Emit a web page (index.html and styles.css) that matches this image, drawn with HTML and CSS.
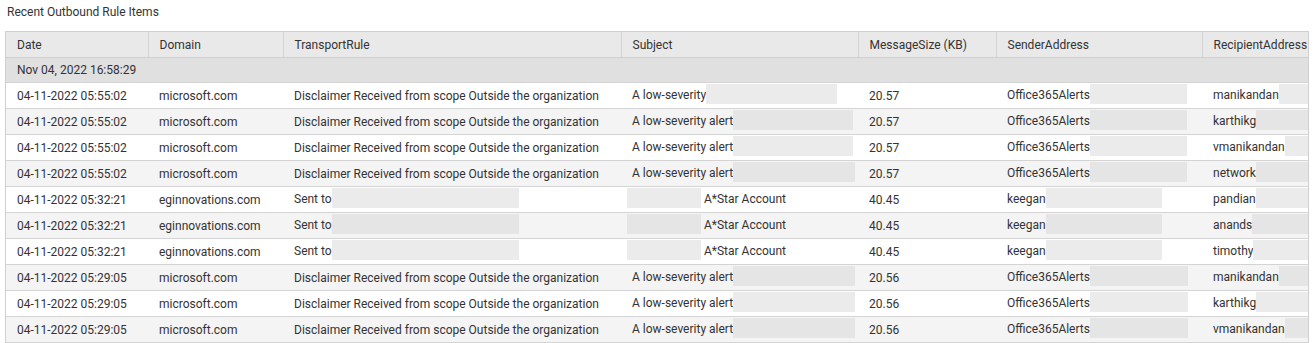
FILE: index.html
```html
<!DOCTYPE html>
<html>
<head>
<meta charset="utf-8">
<link rel="stylesheet" href="styles.css">
</head>
<body>
<div class="page">
  <div class="title">Recent Outbound Rule Items</div>
  <div class="grid-wrap">
    <table class="grid">
      <colgroup>
        <col class="c-date"><col class="c-domain"><col class="c-rule"><col class="c-subj"><col class="c-size"><col class="c-sender"><col class="c-recip">
      </colgroup>
      <thead>
        <tr><th>Date</th><th>Domain</th><th>TransportRule</th><th>Subject</th><th>MessageSize (KB)</th><th>SenderAddress</th><th>RecipientAddress</th></tr>
      </thead>
      <tbody>
        <tr class="group"><td colspan="7">Nov 04, 2022 16:58:29</td></tr>
        <tr><td>04-11-2022 05:55:02</td><td>microsoft.com</td><td>Disclaimer Received from scope Outside the organization</td><td>A low-severity<span class="rd" style="width:131px"></span></td><td>20.57</td><td>Office365Alerts<span class="rd" style="width:97px"></span></td><td>manikandan<span class="rd" style="width:60px"></span></td></tr>
        <tr><td>04-11-2022 05:55:02</td><td>microsoft.com</td><td>Disclaimer Received from scope Outside the organization</td><td>A low-severity alert<span class="rd" style="width:120px"></span></td><td>20.57</td><td>Office365Alerts<span class="rd" style="width:97px"></span></td><td>karthikg<span class="rd" style="width:60px"></span></td></tr>
        <tr><td>04-11-2022 05:55:02</td><td>microsoft.com</td><td>Disclaimer Received from scope Outside the organization</td><td>A low-severity alert<span class="rd" style="width:120px"></span></td><td>20.57</td><td>Office365Alerts<span class="rd" style="width:97px"></span></td><td>vmanikandan<span class="rd" style="width:60px"></span></td></tr>
        <tr><td>04-11-2022 05:55:02</td><td>microsoft.com</td><td>Disclaimer Received from scope Outside the organization</td><td>A low-severity alert<span class="rd" style="width:122px"></span></td><td>20.57</td><td>Office365Alerts<span class="rd" style="width:97px"></span></td><td>network<span class="rd" style="width:60px"></span></td></tr>
        <tr><td>04-11-2022 05:32:21</td><td>eginnovations.com</td><td>Sent to<span class="rd" style="width:187px"></span></td><td><span class="rd lead" style="width:74px"></span>A*Star Account</td><td>40.45</td><td>keegan<span class="rd" style="width:116px"></span></td><td>pandian<span class="rd" style="width:60px"></span></td></tr>
        <tr><td>04-11-2022 05:32:21</td><td>eginnovations.com</td><td>Sent to<span class="rd" style="width:187px"></span></td><td><span class="rd lead" style="width:74px"></span>A*Star Account</td><td>40.45</td><td>keegan<span class="rd" style="width:116px"></span></td><td>anands<span class="rd" style="width:60px"></span></td></tr>
        <tr><td>04-11-2022 05:32:21</td><td>eginnovations.com</td><td>Sent to<span class="rd" style="width:187px"></span></td><td><span class="rd lead" style="width:74px"></span>A*Star Account</td><td>40.45</td><td>keegan<span class="rd" style="width:116px"></span></td><td>timothy<span class="rd" style="width:60px"></span></td></tr>
        <tr><td>04-11-2022 05:29:05</td><td>microsoft.com</td><td>Disclaimer Received from scope Outside the organization</td><td>A low-severity alert<span class="rd" style="width:122px"></span></td><td>20.56</td><td>Office365Alerts<span class="rd" style="width:98px"></span></td><td>manikandan<span class="rd" style="width:60px"></span></td></tr>
        <tr><td>04-11-2022 05:29:05</td><td>microsoft.com</td><td>Disclaimer Received from scope Outside the organization</td><td>A low-severity alert<span class="rd" style="width:122px"></span></td><td>20.56</td><td>Office365Alerts<span class="rd" style="width:98px"></span></td><td>karthikg<span class="rd" style="width:60px"></span></td></tr>
        <tr><td>04-11-2022 05:29:05</td><td>microsoft.com</td><td>Disclaimer Received from scope Outside the organization</td><td>A low-severity alert<span class="rd" style="width:122px"></span></td><td>20.56</td><td>Office365Alerts<span class="rd" style="width:98px"></span></td><td>vmanikandan<span class="rd" style="width:60px"></span></td></tr>
      </tbody>
    </table>
  </div>
</div>
</body>
</html>
```

FILE: styles.css
```css
html, body {
  margin: 0;
  padding: 0;
  background: #ffffff;
}
.page {
  font-family: Roboto, "Liberation Sans", Arial, sans-serif;
  font-size: 12px;
  color: #333333;
  padding: 5px 0 0 5px;
}
.title {
  height: 26px;
  line-height: 14px;
  padding-left: 2px;
  color: #333333;
}
.grid-wrap {
  width: 1302px;
  overflow: hidden;
  border-left: 1px solid #cfcfcf;
  border-right: 1px solid #cfcfcf;
  border-top: 1px solid #cfcfcf;
}
.grid {
  border-collapse: collapse;
  table-layout: fixed;
  width: 1400px;
}
.c-date { width: 142px; }
.c-domain { width: 135px; }
.c-rule { width: 338px; }
.c-subj { width: 237px; }
.c-size { width: 138px; }
.c-sender { width: 206px; }
.c-recip { width: 204px; }
.grid th,
.grid td {
  height: 26px;
  padding: 1px 0 0 11px;
  text-align: left;
  white-space: nowrap;
  overflow: hidden;
  border-bottom: 1px solid #d4d4d4;
  vertical-align: middle;
  box-sizing: border-box;
}
.grid th {
  font-weight: normal;
  background: #e9e9e9;
  color: #333333;
  border-right: 1px solid #d4d4d4;
  border-bottom: 1px solid #cfcfcf;
  height: 25px;
}
.grid tr.group td {
  background: #e0e0e0;
  height: 25px;
}
.grid tbody tr:nth-child(odd):not(.group) td { background: #f4f4f4; }
.grid tbody tr:nth-child(even) td { background: #ffffff; }
.rd {
  display: inline-block;
  height: 20px;
  vertical-align: middle;
  background: #ebebeb;
  margin-top: -3px;
}
.grid tbody tr:nth-child(odd) .rd { background: #e5e5e5; }
.rd.lead {
  margin-left: -5px;
  margin-right: 3px;
}
```
